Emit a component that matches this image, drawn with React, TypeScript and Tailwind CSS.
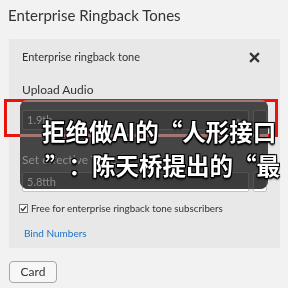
import React from "react";

export default function App() {
  return (
    <div className="relative w-[288px] h-[288px] overflow-hidden bg-[#f2f2f2] text-[#333] font-['Lato',sans-serif]">
      <div className="pl-[8px] pt-[4px] h-[39px] text-[15px] leading-[22px] text-[#333]">Enterprise Ringback Tones</div>
      <div className="ml-[9px] w-[271px] h-[209px] bg-[#e8e8e8] px-[13px] pt-[9px] flex flex-col">
        <div className="flex items-center justify-between h-[18px] text-[11px]">
          <span>Enterprise ringback tone</span>
          <svg width="11" height="11" viewBox="0 0 10 10" className="mr-[7px]">
            <path d="M1 1L9 9M9 1L1 9" stroke="#333" strokeWidth="2" />
          </svg>
        </div>
        <div className="mt-[15px] text-[12px] leading-[18px]">Upload Audio</div>
        <div className="mt-[11px] flex items-center gap-[4px]">
          <div className="w-[228px] h-[20px] bg-white border border-[#c4c4c4] rounded-[2px] flex items-center justify-between px-[4px] text-[11px]">
            <span>1.9th</span>
            <span className="text-[8px] text-[#666] mr-[2px]">▲</span>
          </div>
          <div className="w-[14px] h-[20px] bg-white border border-[#c4c4c4] rounded-[2px]" />
        </div>
        <div className="mt-[21px] text-[12px] leading-[18px]">Set effective Time</div>
        <div className="mt-[3px] flex items-center gap-[4px]">
          <div className="w-[228px] h-[20px] bg-white border border-[#c4c4c4] rounded-[2px] flex items-center px-[4px] text-[11px]">
            <span>5.8tth</span>
          </div>
          <div className="w-[14px] h-[20px] bg-white border border-[#c4c4c4] rounded-[2px]" />
        </div>
        <div className="mt-[8px] flex items-center gap-[3px] -ml-[3px] text-[9.8px] leading-[16px] whitespace-nowrap">
          <div className="w-[9px] h-[9px] border border-[#777] bg-white flex items-center justify-center">
            <svg width="7" height="7" viewBox="0 0 8 8">
              <path d="M1 4L3.2 6.2L7 1.5" stroke="#333" strokeWidth="1.5" fill="none" />
            </svg>
          </div>
          <span>Free for enterprise ringback tone subscribers</span>
        </div>
        <div className="mt-[9px] ml-[2px] text-[10px] leading-[16px] text-[#1a74c9]">Bind Numbers</div>
      </div>
      <div className="ml-[9px] mt-[13px] w-[48px] h-[22px] rounded-[4px] border border-[#a8a8a8] bg-[#f7f7f7] flex items-center justify-center text-[12px] text-[#333]">
        Card
      </div>

      <div className="absolute left-[4px] top-[99px] w-[274px] h-[38px] border-[3px] border-[#e8150f]" />
      <div className="absolute left-[20px] top-[100px] w-[248px] h-[89px] rounded-[8px] backdrop-invert backdrop-hue-rotate-180 bg-[rgba(100,100,100,0.6)]" />
      <div className="absolute left-[42px] top-[114px] font-['Noto_Sans_CJK_SC',sans-serif] font-bold text-[23.5px] leading-[34px] text-white whitespace-nowrap [text-spacing-trim:space-all] [text-shadow:0_0_2px_#000,1px_1px_0_#000,-1px_-1px_0_#000,1px_-1px_0_#000,-1px_1px_0_#000,0_2px_2px_#000]">
        <div>拒绝做AI的“人形接口</div>
        <div className="ml-[3px]">”：陈天桥提出的“最</div>
      </div>
    </div>
  );
}
